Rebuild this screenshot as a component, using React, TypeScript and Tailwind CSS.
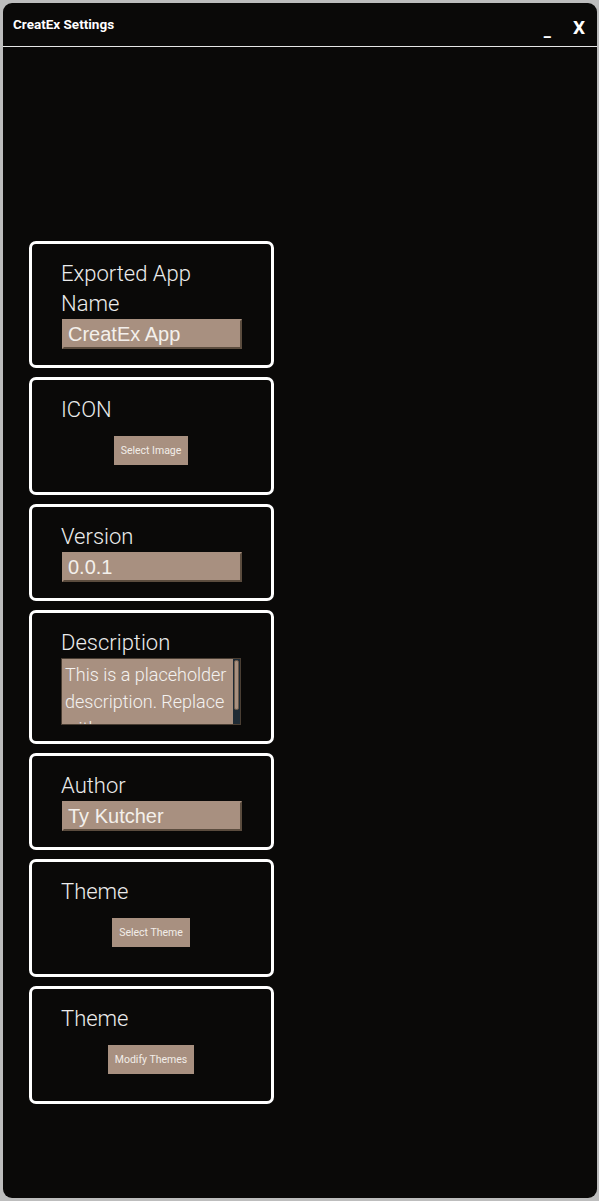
const font = { fontFamily: "Roboto, 'Noto Sans', sans-serif" };

function Field({ value }: { value: string }) {
  return (
    <div className="ml-[1px] flex h-[30px] w-[180px] items-center border-2 border-t-[#a89080] border-l-[#a89080] border-b-[#5b4c3e] border-r-[#5b4c3e] bg-[#a89080] px-[4px] font-['Liberation_Sans',Arial,sans-serif] text-[20px] leading-none text-[#f4f0ec]">
      {value}
    </div>
  );
}

function Btn({ label }: { label: string }) {
  return (
    <div className="my-[11px] flex w-[180px] justify-center">
      <div className="flex h-[29px] items-center bg-[#a89080] px-[7px] text-[10.5px] text-[#f2ede8]">
        {label}
      </div>
    </div>
  );
}

function Card({ title, children }: { title: string; children: React.ReactNode }) {
  return (
    <div className="w-[245px] rounded-[7px] border-[3px] border-white pl-[29px] pt-[15px] pb-[16px]">
      <div className="w-[150px] text-[22px] font-light leading-[30px] text-[#ececec]">{title}</div>
      {children}
    </div>
  );
}

export default function App() {
  return (
    <div className="h-[1201px] w-[599px] bg-[#bdbdbd] p-[3px] pr-[2px]" style={font}>
      <div className="flex h-full flex-col overflow-hidden rounded-[9px] bg-[#0a0908]">
        <div className="flex h-[44px] items-center justify-between border-b border-[#e6e6e6] pl-[10px] pr-[12px]">
          <span className="text-[13.5px] font-bold text-white">CreatEx Settings</span>
          <div className="flex items-end gap-[22px] pt-[8px]">
            <span className="text-[16px] font-bold text-white">_</span>
            <span className="text-[19px] font-bold text-white">X</span>
          </div>
        </div>
        <div className="mt-[194px] ml-[26px] flex flex-col gap-[9px]">
          <Card title="Exported App Name">
            <Field value="CreatEx App" />
          </Card>
          <Card title="ICON">
            <Btn label="Select Image" />
          </Card>
          <Card title="Version">
            <Field value="0.0.1" />
          </Card>
          <Card title="Description">
            <div className="flex h-[67px] w-[180px] border border-[#4a3e33] bg-[#a89080]">
              <div className="flex-1 overflow-hidden px-[3px] pt-[2px] text-[18px] font-light leading-[27px] text-[#f4f2f0]">
                This is a placeholder description. Replace with your own description.
              </div>
              <div className="flex w-[7px] flex-col bg-[#1f2b35]">
                <div className="mx-[1px] mt-[1px] h-[50px] rounded-[2px] border border-[#6b5a4a] bg-[#a89080]" />
              </div>
            </div>
          </Card>
          <Card title="Author">
            <Field value="Ty Kutcher" />
          </Card>
          <Card title="Theme">
            <Btn label="Select Theme" />
          </Card>
          <Card title="Theme">
            <Btn label="Modify Themes" />
          </Card>
        </div>
      </div>
    </div>
  );
}
